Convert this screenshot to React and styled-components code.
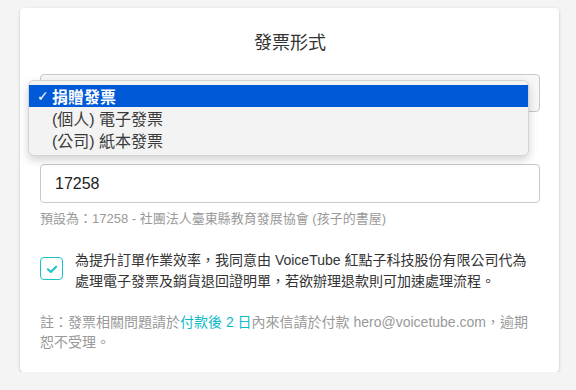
import React from 'react'
import styled, { createGlobalStyle } from 'styled-components'

const GlobalStyle = createGlobalStyle`
    html, body {
        margin: 0;
        padding: 0;
        background-color: #f4f4f4;
        font-family: "Liberation Sans", "Noto Sans CJK TC", sans-serif;
    }
`;

const options = [
    { label: '捐贈發票', selected: true },
    { label: '(個人) 電子發票' },
    { label: '(公司) 紙本發票' },
];

function App() {
    return (
        <Page>
            <GlobalStyle />
            <Card>
                <Title>發票形式</Title>
                <SelectWrap>
                    <SelectBox />
                    <Menu>
                        {options.map((o) => (
                            <MenuItem key={o.label} selected={o.selected}>
                                <Tick>{o.selected ? '✓' : ''}</Tick>
                                {o.label}
                            </MenuItem>
                        ))}
                    </Menu>
                </SelectWrap>
                <Input defaultValue="17258" />
                <Helper>預設為：17258 - 社團法人臺東縣教育發展協會 (孩子的書屋)</Helper>
                <Agree>
                    <CheckBox>
                        <svg width="14" height="14" viewBox="0 0 24 24" fill="none" stroke="#1cc0cb" strokeWidth="3.5" strokeLinecap="round" strokeLinejoin="round">
                            <polyline points="5 12.5 10 17 19 8" />
                        </svg>
                    </CheckBox>
                    <AgreeText>
                        為提升訂單作業效率，我同意由 VoiceTube 紅點子科技股份有限公司代為處理電子發票及銷貨退回證明單，若欲辦理退款則可加速處理流程。
                    </AgreeText>
                </Agree>
                <Note>
                    註：發票相關問題請於<Highlight>付款後 2 日</Highlight>內來信請於付款 hero@voicetube.com，逾期恕不受理。
                </Note>
            </Card>
        </Page>
    )
}

const Page = styled.div`
    padding: 8px 17px 0 20px;
`;

const Card = styled.div`
    background-color: #fff;
    border-radius: 4px;
    box-shadow: 0px 1px 3px rgba(0, 0, 0, 0.22);
    padding: 22px 19px 20px 20px;
`;

const Title = styled.h2`
    margin: 0 0 18px;
    text-align: center;
    font-size: 18px;
    line-height: 26px;
    font-weight: 400;
    color: #333;
`;

const SelectWrap = styled.div`
    position: relative;
    margin-bottom: 52px;
`;

const SelectBox = styled.div`
    height: 36px;
    border: 1px solid #c9c9c9;
    border-radius: 4px;
    background-color: #f7f7f7;
`;

const Menu = styled.div`
    position: absolute;
    left: -12px;
    top: 6px;
    width: 501px;
    padding: 4px 0;
    box-sizing: border-box;
    background-color: #f3f3f3;
    border: 1px solid #d4d4d4;
    border-radius: 6px;
    box-shadow: 0px 4px 10px rgba(0, 0, 0, 0.18);
`;

const MenuItem = styled.div`
    display: flex;
    align-items: center;
    height: 22px;
    font-size: 16px;
    color: ${(p) => (p.selected ? '#fff' : '#3a3a3a')};
    background-color: ${(p) => (p.selected ? '#0059d6' : 'transparent')};
    font-weight: ${(p) => (p.selected ? 700 : 400)};
`;

const Tick = styled.span`
    width: 23px;
    padding-left: 8px;
    box-sizing: border-box;
    font-size: 14px;
    font-family: "DejaVu Sans", sans-serif;
`;

const Input = styled.input`
    display: block;
    width: 100%;
    box-sizing: border-box;
    height: 39px;
    padding: 0 14px;
    border: 1px solid #c9c9c9;
    border-radius: 4px;
    font-family: "Liberation Sans", "Noto Sans CJK TC", sans-serif;
    font-size: 16px;
    color: #222;
    outline: none;
`;

const Helper = styled.p`
    margin: 7px 0 22px;
    font-size: 13px;
    line-height: 18px;
    color: #9a9a9a;
`;

const Agree = styled.div`
    display: flex;
    align-items: flex-start;
    gap: 12px;
`;

const CheckBox = styled.div`
    flex: none;
    width: 21px;
    height: 21px;
    margin-top: 7px;
    border: 1.5px solid #1cc0cb;
    border-radius: 4px;
    display: flex;
    align-items: center;
    justify-content: center;
`;

const AgreeText = styled.p`
    margin: 0;
    font-size: 14px;
    line-height: 21px;
    color: #333;
`;

const Note = styled.p`
    margin: 20px 0 0;
    font-size: 14px;
    line-height: 20px;
    color: #999;
`;

const Highlight = styled.span`
    color: #10b9c9;
`;

export default App;
